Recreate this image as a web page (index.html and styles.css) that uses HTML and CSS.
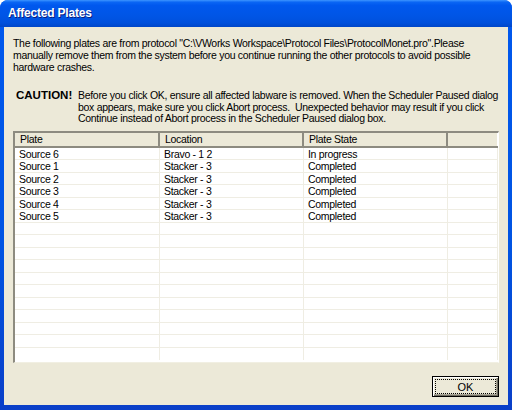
FILE: index.html
```html
<!DOCTYPE html>
<html>
<head>
<meta charset="utf-8">
<link rel="stylesheet" href="styles.css">
</head>
<body>
<div class="window">
  <div class="titlebar"><span class="title">Affected Plates</span></div>
  <div class="client">
    <p class="intro">The following plates are from protocol "C:\VWorks Workspace\Protocol Files\ProtocolMonet.pro".Please<br>manually remove them from the system before you continue running the other protocols to avoid possible<br>hardware crashes.</p>
    <div class="caution">
      <span class="caution-label">CAUTION!</span>
      <span class="caution-text">Before you click OK, ensure all affected labware is removed. When the Scheduler Paused dialog<br>box appears, make sure you click Abort process.&nbsp; Unexpected behavior may result if you click<br>Continue instead of Abort process in the Scheduler Paused dialog box.</span>
    </div>
    <div class="list">
      <div class="row head">
        <div class="cell c1">Plate</div>
        <div class="cell c2">Location</div>
        <div class="cell c3">Plate State</div>
        <div class="cell c4"></div>
      </div>
      <div class="body">
        <div class="row"><div class="cell c1">Source 6</div><div class="cell c2">Bravo - 1 2</div><div class="cell c3">In progress</div><div class="cell c4"></div></div>
        <div class="row"><div class="cell c1">Source 1</div><div class="cell c2">Stacker - 3</div><div class="cell c3">Completed</div><div class="cell c4"></div></div>
        <div class="row"><div class="cell c1">Source 2</div><div class="cell c2">Stacker - 3</div><div class="cell c3">Completed</div><div class="cell c4"></div></div>
        <div class="row"><div class="cell c1">Source 3</div><div class="cell c2">Stacker - 3</div><div class="cell c3">Completed</div><div class="cell c4"></div></div>
        <div class="row"><div class="cell c1">Source 4</div><div class="cell c2">Stacker - 3</div><div class="cell c3">Completed</div><div class="cell c4"></div></div>
        <div class="row"><div class="cell c1">Source 5</div><div class="cell c2">Stacker - 3</div><div class="cell c3">Completed</div><div class="cell c4"></div></div>
        <div class="row"><div class="cell c1"></div><div class="cell c2"></div><div class="cell c3"></div><div class="cell c4"></div></div>
        <div class="row"><div class="cell c1"></div><div class="cell c2"></div><div class="cell c3"></div><div class="cell c4"></div></div>
        <div class="row"><div class="cell c1"></div><div class="cell c2"></div><div class="cell c3"></div><div class="cell c4"></div></div>
        <div class="row"><div class="cell c1"></div><div class="cell c2"></div><div class="cell c3"></div><div class="cell c4"></div></div>
        <div class="row"><div class="cell c1"></div><div class="cell c2"></div><div class="cell c3"></div><div class="cell c4"></div></div>
        <div class="row"><div class="cell c1"></div><div class="cell c2"></div><div class="cell c3"></div><div class="cell c4"></div></div>
        <div class="row"><div class="cell c1"></div><div class="cell c2"></div><div class="cell c3"></div><div class="cell c4"></div></div>
        <div class="row"><div class="cell c1"></div><div class="cell c2"></div><div class="cell c3"></div><div class="cell c4"></div></div>
        <div class="row"><div class="cell c1"></div><div class="cell c2"></div><div class="cell c3"></div><div class="cell c4"></div></div>
        <div class="row"><div class="cell c1"></div><div class="cell c2"></div><div class="cell c3"></div><div class="cell c4"></div></div>
        <div class="row last"><div class="cell c1"></div><div class="cell c2"></div><div class="cell c3"></div><div class="cell c4"></div></div>
      </div>
    </div>
    <div class="footer">
      <button class="btn"><span class="btn-focus">OK</span></button>
    </div>
  </div>
</div>
</body>
</html>
```

FILE: styles.css
```css
html, body {
  margin: 0;
  padding: 0;
  background: #ffffff;
}
.window {
  width: 512px;
  height: 410px;
  box-sizing: border-box;
  display: flex;
  flex-direction: column;
  background: linear-gradient(to bottom, #0058ee 0%, #0054e3 60%, #0a3fc8 100%);
  border-radius: 8px 8px 0 0;
  overflow: hidden;
  font-family: "Liberation Sans", Arial, sans-serif;
  font-size: 10.5px;
  letter-spacing: -0.3px;
  color: #000;
}
.titlebar {
  height: 27px;
  flex: 0 0 27px;
  display: flex;
  align-items: center;
  padding-left: 8px;
  background: linear-gradient(to bottom, #3d95ff 0%, #0a66f4 8%, #0058ee 20%, #0055e5 60%, #0050dc 85%, #0046c8 100%);
}
.title {
  color: #ffffff;
  font-weight: bold;
  font-size: 12px;
  letter-spacing: -0.2px;
  text-shadow: 1px 1px 0 #0a1e80;
  margin-top: -1px;
}
.client {
  flex: 1;
  margin: 0 4px 5px 4px;
  background: #ece9d8;
  display: flex;
  flex-direction: column;
  padding: 0 9px 0 9px;
  box-sizing: border-box;
}
.intro {
  margin: 10px 0 0 0;
  line-height: 12px;
  white-space: nowrap;
}
.caution {
  display: flex;
  margin-top: 16px;
  margin-left: 3px;
  white-space: nowrap;
}
.caution-label {
  font-weight: bold;
  font-size: 11.5px;
  letter-spacing: 0;
  width: 62px;
  flex: 0 0 62px;
  line-height: 13px;
}
.caution-text {
  line-height: 11.5px;
  padding-top: 1px;
}
.list {
  margin-top: 6px;
  width: 486px;
  height: 232px;
  box-sizing: border-box;
  background: #ffffff;
  border-top: 2px solid #8d8b80;
  border-left: 2px solid #8d8b80;
  border-right: 1px solid #ffffff;
  border-bottom: 1px solid #f1efe2;
  display: flex;
  flex-direction: column;
}
.row {
  display: flex;
  height: 12.5px;
  box-sizing: border-box;
  border-bottom: 1px solid #efede3;
}
.cell {
  box-sizing: border-box;
  height: 100%;
  padding-left: 4px;
  line-height: 12px;
  white-space: nowrap;
  border-right: 1px solid #efede3;
}
.c1 { width: 145px; }
.c2 { width: 144px; }
.c3 { width: 144px; }
.c4 { width: 50px; }
.row.head {
  height: 15px;
  background: #ece9d8;
  border-bottom: 2px solid #8d8b80;
}
.row.head .cell {
  line-height: 13px;
  padding-left: 5px;
  border-right: 2px solid #8d8b80;
}
.row.head .c4 {
  border-right: 1px solid #ffffff;
}
.body .row:first-child .cell {
  line-height: 13px;
}
.row.last {
  border-bottom: none;
}
.footer {
  flex: 1;
  display: flex;
  justify-content: flex-end;
  align-items: flex-end;
  padding-bottom: 8px;
}
.btn {
  width: 67px;
  height: 21px;
  padding: 2px;
  box-sizing: border-box;
  border: 1px solid #000000;
  background: #ece9d8;
  box-shadow: inset 1px 1px 0 #ffffff, inset -1px -1px 0 #716f64, inset -2px -2px 0 #aca899;
  font-family: "Liberation Sans", Arial, sans-serif;
  font-size: 11px;
  color: #000;
  display: flex;
}
.btn-focus {
  flex: 1;
  border: 1px dotted #000000;
  display: flex;
  align-items: center;
  justify-content: center;
  line-height: 12px;
}
```
